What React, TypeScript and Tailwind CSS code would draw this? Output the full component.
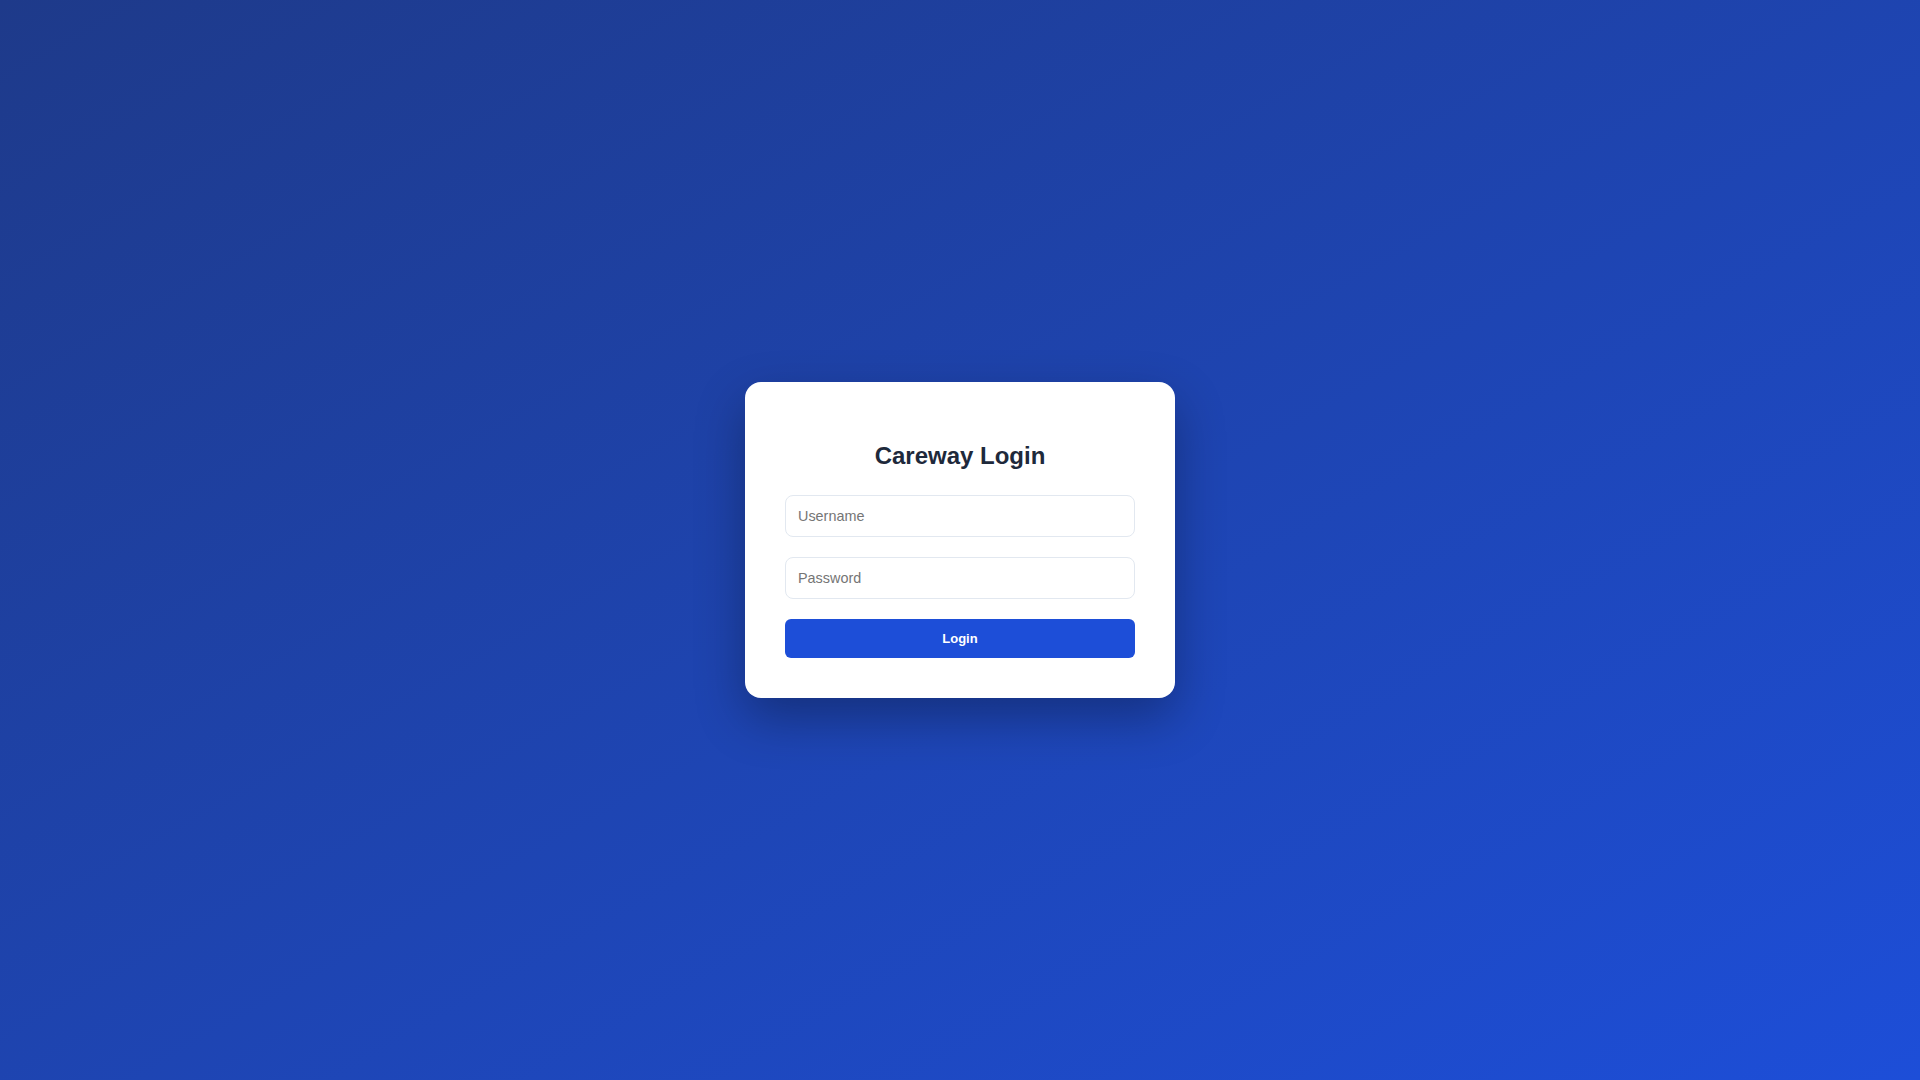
import React from "react";

export default function App() {
  return (
    <div
      className="min-h-screen w-full flex items-center justify-center bg-linear-to-br from-[#1e3a8a] to-[#1d4ed8]"
      style={{ fontFamily: '"Liberation Sans", Arial, sans-serif' }}
    >
      <div className="w-[430px] bg-white rounded-2xl shadow-[0_20px_50px_rgba(0,0,0,0.3)] pt-[58px] px-10 pb-10">
        <h1 className="text-2xl leading-8 font-bold text-center text-[#1e293b] mb-[23px]">
          Careway Login
        </h1>
        <form className="flex flex-col" onSubmit={(e) => e.preventDefault()}>
          <input
            type="text"
            placeholder="Username"
            className="h-[42px] w-full border border-[#e2e8f0] rounded-lg px-3 text-[14.4px] text-[#1e293b] placeholder:text-[#757575] outline-none"
          />
          <input
            type="password"
            placeholder="Password"
            className="mt-5 h-[42px] w-full border border-[#e2e8f0] rounded-lg px-3 text-[14.4px] text-[#1e293b] placeholder:text-[#757575] outline-none"
          />
          <button
            type="submit"
            className="mt-5 h-[39px] w-full rounded-md bg-[#1d4ed8] text-white text-[13px] font-bold"
          >
            Login
          </button>
        </form>
      </div>
    </div>
  );
}
